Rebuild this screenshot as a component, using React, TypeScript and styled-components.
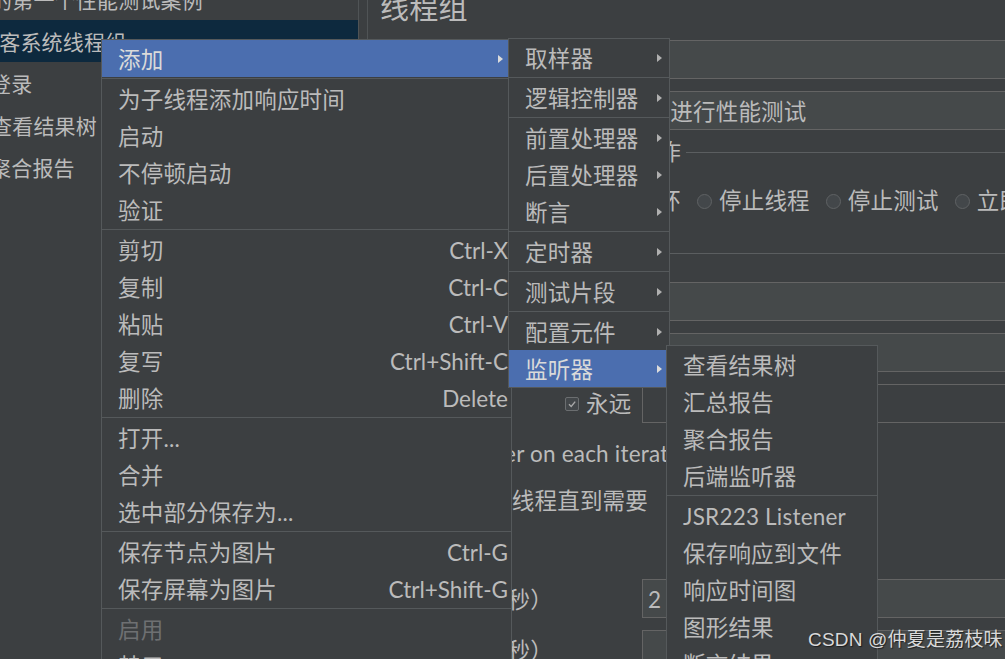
import React from "react";
import styled, { createGlobalStyle } from "styled-components";

const FONT = `"Lato", "Noto Sans CJK SC", sans-serif`;

const GlobalStyle = createGlobalStyle`
  html, body { margin: 0; padding: 0; background: #3c3f41; }
  body { overflow: hidden; }
  * { box-sizing: border-box; }
`;

const Screen = styled.div`
  position: relative;
  width: 1005px;
  height: 659px;
  overflow: hidden;
  display: flex;
  background: #3c3f41;
  color: #bbbbbb;
  font-family: ${FONT};
  font-size: 22.5px;
  letter-spacing: 0.2px;
`;

/* ---------- tree ---------- */
const TreePane = styled.div`
  width: 359px;
  flex: none;
  border-right: 1px solid #505456;
  overflow: hidden;
`;

const TreeList = styled.div`
  margin-top: -22px;
  display: flex;
  flex-direction: column;
`;

const TreeRow = styled.div<{ $indent: number; $selected?: boolean }>`
  height: 42px;
  padding-top: 2px;
  line-height: 40px;
  font-size: 21px;
  white-space: nowrap;
  text-indent: ${(p) => p.$indent}px;
  background: ${(p) => (p.$selected ? "#0d293e" : "transparent")};
`;

/* ---------- content ---------- */
const ContentPane = styled.div`
  flex: 1;
  min-width: 0;
  margin-left: 8px;
  border-left: 1px solid #505456;
  overflow: hidden;
  padding-left: 12px;
`;

const Inner = styled.div`
  margin-right: -12px;
`;

const Title = styled.div`
  margin-top: -10px;
  height: 36px;
  line-height: 36px;
  font-size: 29px;
  white-space: nowrap;
`;

const FormRow = styled.div<{ $mt: number; $pl?: number }>`
  display: flex;
  align-items: center;
  height: 39px;
  line-height: 39px;
  margin-top: ${(p) => p.$mt}px;
  padding-left: ${(p) => p.$pl ?? 0}px;
`;

const FieldLabel = styled.div<{ $w: number }>`
  width: ${(p) => p.$w}px;
  flex: none;
  white-space: nowrap;
  overflow: hidden;
  padding-top: 2px;
  line-height: 37px;
`;

const Field = styled.div<{ $disabled?: boolean }>`
  flex: 1;
  min-width: 0;
  height: 39px;
  padding-top: 2px;
  line-height: 35px;
  padding-left: 5px;
  white-space: nowrap;
  overflow: hidden;
  border: 1px solid #646464;
  background: ${(p) => (p.$disabled ? "#3c3f41" : "#45494a")};
`;

const Legend = styled.div<{ $mt: number }>`
  display: flex;
  align-items: center;
  height: 30px;
  line-height: 30px;
  margin-top: ${(p) => p.$mt}px;
`;

const LegendText = styled.span`
  padding: 0 5px 0 6px;
  white-space: nowrap;
`;

const LegendLine = styled.div`
  flex: 1;
  height: 1px;
  background: #5b5e60;
`;

const GroupBody = styled.div`
  padding-left: 14px;
`;

const RadioRow = styled.div<{ $mt: number }>`
  display: flex;
  align-items: center;
  gap: 16px;
  height: 38px;
  line-height: 38px;
  margin-top: ${(p) => p.$mt}px;
  white-space: nowrap;
`;

const RadioItem = styled.label`
  display: flex;
  align-items: center;
  gap: 7px;
  flex: none;
`;

const RadioDot = styled.span`
  width: 15px;
  height: 15px;
  border-radius: 50%;
  border: 1px solid #5f6264;
  background: #43474a;
  flex: none;
`;

const CheckRow = styled.div<{ $mt: number; $pl?: number }>`
  display: flex;
  align-items: center;
  gap: 7px;
  height: 40px;
  line-height: 40px;
  margin-top: ${(p) => p.$mt}px;
  padding-left: ${(p) => p.$pl ?? 6}px;
  white-space: nowrap;
`;

const CheckCell = styled.div<{ $w: number }>`
  width: ${(p) => p.$w}px;
  flex: none;
  display: flex;
  align-items: center;
  gap: 7px;
  white-space: nowrap;
`;

const CheckBoxBox = styled.span`
  width: 14px;
  height: 14px;
  flex: none;
  border: 1px solid #6b6e70;
  border-radius: 2px;
  background: #43474a;
  display: flex;
  align-items: center;
  justify-content: center;
`;

const CheckBox = ({ checked }: { checked?: boolean }) => (
  <CheckBoxBox>
    {checked && (
      <svg width="10" height="10" viewBox="0 0 10 10">
        <polyline points="2,5.2 4.2,7.4 8.2,2.6" fill="none" stroke="#a9a9a9" strokeWidth="1.4" />
      </svg>
    )}
  </CheckBoxBox>
);

/* ---------- popup menus ---------- */
const Menu = styled.div<{ $left: number; $top: number; $width: number }>`
  position: absolute;
  left: ${(p) => p.$left}px;
  top: ${(p) => p.$top}px;
  width: ${(p) => p.$width}px;
  background: #3c3f41;
  border: 1px solid #55595b;
  display: flex;
  flex-direction: column;
  font-family: ${FONT};
  font-size: 22.5px;
  z-index: 2;
`;

const MenuItem = styled.div<{ $active?: boolean; $disabled?: boolean; $pr?: number }>`
  display: flex;
  align-items: center;
  height: 37px;
  padding-top: 2px;
  line-height: 37px;
  flex: none;
  padding-left: 16px;
  padding-right: ${(p) => p.$pr ?? 8}px;
  white-space: nowrap;
  background: ${(p) => (p.$active ? "#4b6eaf" : "transparent")};
  color: ${(p) => (p.$disabled ? "#6e7072" : p.$active ? "#dadada" : "#bbbbbb")};
`;

const ItemLabel = styled.span`
  flex: 1;
  letter-spacing: 0.2px;
`;

const Shortcut = styled.span`
  letter-spacing: 0;
`;

const Arrow = styled.span<{ $active?: boolean }>`
  width: 0;
  height: 0;
  margin-top: -2px;
  border-top: 4.5px solid transparent;
  border-bottom: 4.5px solid transparent;
  border-left: 5px solid ${(p) => (p.$active ? "#dcdcdc" : "#b0b0b0")};
`;

const Separator = styled.div`
  height: 1px;
  margin: 1px 0;
  background: #55595b;
  flex: none;
`;

const Watermark = styled.div`
  position: absolute;
  left: 808px;
  top: 629px;
  font-family: "Liberation Sans", "Noto Sans CJK SC", sans-serif;
  font-size: 19px;
  line-height: 22px;
  color: #d9d9d9;
  text-shadow: 1px 1px 1px rgba(0, 0, 0, 0.55);
  white-space: nowrap;
  z-index: 5;
`;

type Entry =
  | { sep: true }
  | { label: string; shortcut?: string; sub?: boolean; active?: boolean; disabled?: boolean };

const mainItems: Entry[] = [
  { label: "添加", sub: true, active: true },
  { sep: true },
  { label: "为子线程添加响应时间" },
  { label: "启动" },
  { label: "不停顿启动" },
  { label: "验证" },
  { sep: true },
  { label: "剪切", shortcut: "Ctrl-X" },
  { label: "复制", shortcut: "Ctrl-C" },
  { label: "粘贴", shortcut: "Ctrl-V" },
  { label: "复写", shortcut: "Ctrl+Shift-C" },
  { label: "删除", shortcut: "Delete" },
  { sep: true },
  { label: "打开..." },
  { label: "合并" },
  { label: "选中部分保存为..." },
  { sep: true },
  { label: "保存节点为图片", shortcut: "Ctrl-G" },
  { label: "保存屏幕为图片", shortcut: "Ctrl+Shift-G" },
  { sep: true },
  { label: "启用", disabled: true },
  { label: "禁用" },
];

const addItems: Entry[] = [
  { label: "取样器", sub: true },
  { sep: true },
  { label: "逻辑控制器", sub: true },
  { sep: true },
  { label: "前置处理器", sub: true },
  { label: "后置处理器", sub: true },
  { label: "断言", sub: true },
  { sep: true },
  { label: "定时器", sub: true },
  { sep: true },
  { label: "测试片段", sub: true },
  { sep: true },
  { label: "配置元件", sub: true },
  { label: "监听器", sub: true, active: true },
];

const listenerItems: Entry[] = [
  { label: "查看结果树" },
  { label: "汇总报告" },
  { label: "聚合报告" },
  { label: "后端监听器" },
  { sep: true },
  { label: "JSR223 Listener" },
  { label: "保存响应到文件" },
  { label: "响应时间图" },
  { label: "图形结果" },
  { label: "断言结果" },
];

const MenuEntries = ({ items, arrowPad, shortcutPad }: { items: Entry[]; arrowPad: number; shortcutPad: number }) => (
  <>
    {items.map((it, i) =>
      "sep" in it ? (
        <Separator key={i} />
      ) : (
        <MenuItem
          key={i}
          $active={it.active}
          $disabled={it.disabled}
          $pr={it.sub ? arrowPad : shortcutPad}
        >
          <ItemLabel>{it.label}</ItemLabel>
          {it.shortcut && <Shortcut>{it.shortcut}</Shortcut>}
          {it.sub && <Arrow $active={it.active} />}
        </MenuItem>
      )
    )}
  </>
);

export default function App() {
  return (
    <>
      <GlobalStyle />
      <Screen>
        <TreePane>
          <TreeList>
            <TreeRow $indent={-9}>的第一个性能测试案例</TreeRow>
            <TreeRow $indent={-22} $selected>
              博客系统线程组
            </TreeRow>
            <TreeRow $indent={-10}>登录</TreeRow>
            <TreeRow $indent={-9}>查看结果树</TreeRow>
            <TreeRow $indent={-10}>聚合报告</TreeRow>
          </TreeList>
        </TreePane>

        <ContentPane>
          <Inner>
            <Title>线程组</Title>
            <FormRow $mt={14}>
              <FieldLabel $w={80}>名称：</FieldLabel>
              <Field>博客系统线程组</Field>
            </FormRow>
            <FormRow $mt={12}>
              <FieldLabel $w={80}>注释：</FieldLabel>
              <Field>对博客系统登录功能进行性能测试</Field>
            </FormRow>

            <Legend $mt={7}>
              <LegendText>在取样器错误后要执行的动作</LegendText>
              <LegendLine />
            </Legend>
            <GroupBody>
              <RadioRow $mt={15}>
                <RadioItem>
                  <RadioDot />
                  继续
                </RadioItem>
                <RadioItem>
                  <RadioDot />
                  启动下一进程循环
                </RadioItem>
                <RadioItem>
                  <RadioDot />
                  停止线程
                </RadioItem>
                <RadioItem>
                  <RadioDot />
                  停止测试
                </RadioItem>
                <RadioItem>
                  <RadioDot />
                  立即停止测试
                </RadioItem>
              </RadioRow>
            </GroupBody>

            <Legend $mt={18}>
              <LegendText>线程属性</LegendText>
              <LegendLine />
            </Legend>
            <GroupBody>
              <FormRow $mt={14}>
                <FieldLabel $w={216}>线程数：</FieldLabel>
                <Field>10</Field>
              </FormRow>
              <FormRow $mt={12}>
                <FieldLabel $w={216}>Ramp-Up时间（秒）：</FieldLabel>
                <Field>1</Field>
              </FormRow>
              <FormRow $mt={12}>
                <FieldLabel $w={171}>循环次数</FieldLabel>
                <CheckCell $w={77}>
                  <CheckBox checked />
                  永远
                </CheckCell>
                <Field $disabled />
              </FormRow>
              <CheckRow $mt={11} $pl={6}>
                <CheckBox checked />
                Same user on each iteration
              </CheckRow>
              <CheckRow $mt={7}>
                <CheckBox />
                延迟创建线程直到需要
              </CheckRow>
              <CheckRow $mt={7}>
                <CheckBox checked />
                调度器
              </CheckRow>
              <FormRow $mt={11} $pl={0}>
                <FieldLabel $w={248}>持续时间（秒）</FieldLabel>
                <Field>2</Field>
              </FormRow>
              <FormRow $mt={12} $pl={0}>
                <FieldLabel $w={248}>启动延迟（秒）</FieldLabel>
                <Field />
              </FormRow>
            </GroupBody>
          </Inner>
        </ContentPane>

        <Menu $left={101} $top={39} $width={411}>
          <MenuEntries items={mainItems} arrowPad={8} shortcutPad={3} />
        </Menu>
        <Menu $left={508} $top={38} $width={162}>
          <MenuEntries items={addItems} arrowPad={7} shortcutPad={7} />
        </Menu>
        <Menu $left={666} $top={345} $width={212}>
          <MenuEntries items={listenerItems} arrowPad={7} shortcutPad={7} />
        </Menu>

        <Watermark>CSDN @仲夏是荔枝味</Watermark>
      </Screen>
    </>
  );
}
